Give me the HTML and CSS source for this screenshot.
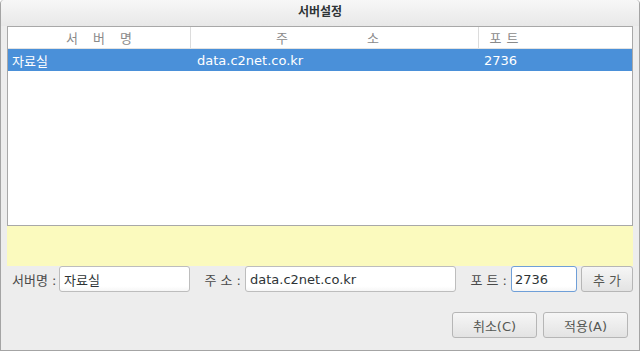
FILE: index.html
```html
<!DOCTYPE html>
<html lang="ko">
<head>
    <meta charset="UTF-8">
    <title>서버설정</title>
    <link rel="stylesheet" href="styles.css">
</head>
<body>
    <div class="window">
        <!-- Title bar -->
        <div class="titlebar">서버설정</div>

        <div class="content">
            <!-- Server list -->
            <div class="server-list">
                <div class="list-header">
                    <div class="col col-name"><span class="head-name">서 버 명</span></div>
                    <div class="col col-addr"><span class="head-addr">주 소</span></div>
                    <div class="col col-port"><span class="head-port">포 트</span></div>
                    <div class="col col-fill"></div>
                </div>
                <div class="list-row selected">
                    <div class="cell cell-name">자료실</div>
                    <div class="cell cell-addr">data.c2net.co.kr</div>
                    <div class="cell cell-port">2736</div>
                </div>
            </div>

            <!-- Message area -->
            <div class="notice"></div>

            <!-- Edit row -->
            <div class="edit-row">
                <label class="field-label label-name">서버명 :</label>
                <input class="field input-name" type="text" value="자료실">
                <label class="field-label label-addr">주 소 :</label>
                <input class="field input-addr" type="text" value="data.c2net.co.kr">
                <label class="field-label label-port">포 트 :</label>
                <input class="field input-port focused" type="text" value="2736">
                <button class="btn btn-add">추 가</button>
            </div>
        </div>

        <!-- Dialog buttons -->
        <div class="actions">
            <button class="btn btn-action">취소(C)</button>
            <button class="btn btn-action">적용(A)</button>
        </div>
    </div>
</body>
</html>
```

FILE: styles.css
```css
* {
    margin: 0;
    padding: 0;
    box-sizing: border-box;
    font-family: 'DejaVu Sans', 'Noto Sans CJK KR', sans-serif;
}

body {
    width: 640px;
    height: 351px;
    overflow: hidden;
    background-color: #ffffff;
}

.window {
    width: 640px;
    height: 351px;
    background-color: #ededed;
    border: 1px solid #a4a4a4;
    border-top: none;
    border-radius: 4px 4px 0 0;
    display: flex;
    flex-direction: column;
    color: #2e3436;
}

.titlebar {
    height: 26px;
    line-height: 24px;
    text-align: center;
    font-size: 12px;
    font-weight: 700;
    color: #2e3436;
    background: linear-gradient(#f7f7f7, #e8e8e8);
    border-radius: 4px 4px 0 0;
}

.content {
    padding: 0 6px;
}

/* Server list */
.server-list {
    height: 200px;
    border: 1px solid #a8a8a8;
    background-color: white;
}

.list-header {
    display: flex;
    height: 22px;
    border-bottom: 1px solid #e2e2e2;
}

.col {
    display: flex;
    align-items: center;
    justify-content: center;
    font-size: 13px;
    color: #8a8a8a;
    white-space: pre;
}

.col-name {
    width: 183px;
    border-right: 1px solid #dcdcdc;
}

.col-addr {
    width: 288px;
    border-right: 1px solid #dcdcdc;
}

.col-port {
    width: 48px;
}

.col-fill {
    flex: 1;
}

.head-name {
    word-spacing: 11px;
}

.head-addr {
    word-spacing: 75px;
    margin-left: -14px;
}

.head-port {
    word-spacing: 1px;
    margin-left: 2px;
}

.list-row {
    display: flex;
    height: 22px;
    align-items: center;
    font-size: 13px;
}

.list-row.selected {
    background-color: #4a90d9;
    color: white;
}

.cell {
    padding-left: 4px;
}

.cell-name {
    width: 184px;
}

.cell-addr {
    width: 288px;
    padding-left: 5px;
}

/* Yellow message area */
.notice {
    height: 40px;
    background-color: #fbfabe;
}

/* Edit row */
.edit-row {
    display: flex;
    align-items: center;
    height: 26px;
    padding-left: 5px;
}

.field-label {
    font-size: 13px;
    color: #4a4a4a;
    white-space: pre;
    text-align: right;
}

.label-name {
    width: 44px;
    margin-right: 3px;
}

.label-addr,
.label-port {
    width: 51px;
    margin-right: 4px;
}

.field {
    height: 26px;
    border: 1px solid #bdbdbd;
    border-radius: 3px;
    background: linear-gradient(#ffffff 80%, #f6f6f6);
    font-size: 13px;
    color: #2e3436;
    padding: 0 4px;
    outline: none;
}

.input-name {
    width: 131px;
}

.input-addr {
    width: 211px;
}

.input-port {
    width: 66px;
    margin-right: 4px;
    padding-left: 3px;
}

.field.focused {
    border-color: #6f9fd8;
}

.btn {
    border: 1px solid #b6b6b6;
    border-radius: 3px;
    background: linear-gradient(#f6f6f6, #e3e3e3);
    font-size: 13px;
    color: #555753;
    white-space: pre;
}

.btn-add {
    width: 52px;
    height: 26px;
}

/* Dialog buttons */
.actions {
    display: flex;
    justify-content: flex-end;
    gap: 6px;
    padding: 20px 11px 0 0;
}

.btn-action {
    width: 85px;
    height: 26px;
}
```
